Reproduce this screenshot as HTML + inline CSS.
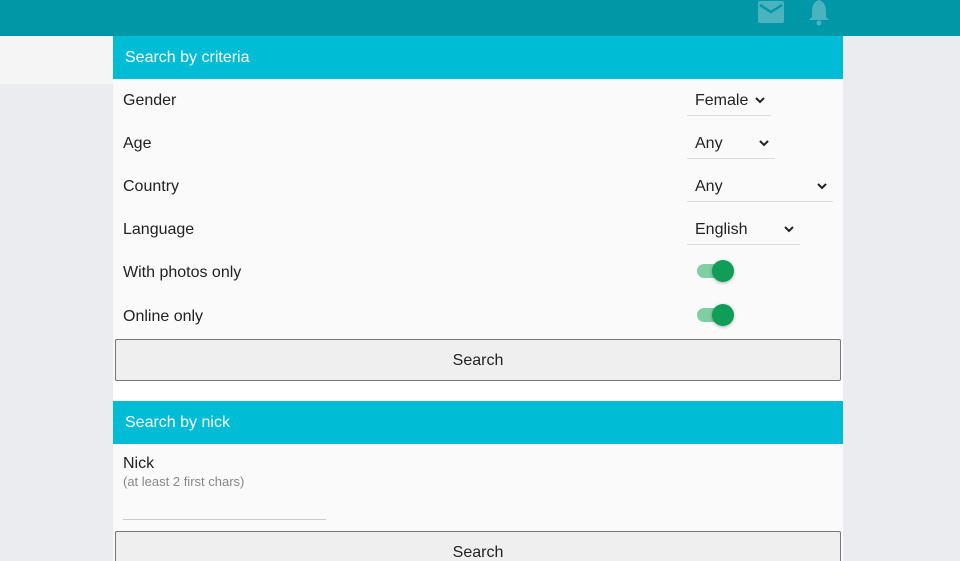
<!DOCTYPE html><html style="overflow:hidden;height:561px"><head><style>
body{margin:0;width:960px;height:561px;overflow:hidden;background:#ebecef;font-family:"Liberation Sans",Roboto,sans-serif;color:#222;position:relative}
.a{position:absolute}
.top{left:0;top:0;width:960px;height:36px;background:#0097a7}
.lb{left:0;top:36px;width:113px;height:48px;background:#f5f5f5}
.panel{left:113px;top:36px;width:730px;height:525px;background:#fafafa}
.hd{left:113px;width:730px;height:43px;background:#00bcd4;color:#fff;font-size:16px;line-height:44px;text-indent:12px}
.lbl{left:123px;font-size:16px}
.sel{font-size:16px;border-bottom:1px solid #ddd;height:30px;line-height:30px;padding-left:8px;box-sizing:border-box}
.sel svg{position:absolute;right:6px;top:11px}
.btn{left:115px;width:724px;height:40px;border:1px solid #777;border-radius:2px;background:#efefef;text-align:center;line-height:41px;font-size:16px}
.tr{left:697px;width:34px;height:14px;border-radius:7px;background:#7fcfa3}
.th{left:712px;width:22px;height:22px;border-radius:50%;background:#0f9d58;box-shadow:0 1px 3px rgba(0,0,0,.3)}
</style></head><body>
<div class="a top"></div>
<svg class="a" style="left:757px;top:1px" width="28" height="22" viewBox="0 0 28 22"><rect x="1" y="0" width="26" height="22" rx="2" fill="#4bb3bf"/><path d="M3 4 L14 11 L25 4" stroke="#0097a7" stroke-width="2.5" fill="none"/></svg>
<svg class="a" style="left:807px;top:0" width="24" height="26" viewBox="0 0 24 26"><path d="M12 0 C6 2 5 7 5 12 L5 17 L2 20 L22 20 L19 17 L19 12 C19 7 18 2 12 0Z" fill="#4bb3bf"/><circle cx="12" cy="23" r="2.5" fill="#4bb3bf"/></svg>
<div class="a lb"></div>
<div class="a panel"></div>
<div class="a hd" style="top:36px">Search by criteria</div>
<div class="a lbl" style="top:92px">Gender</div>
<div class="a lbl" style="top:135px">Age</div>
<div class="a lbl" style="top:178px">Country</div>
<div class="a lbl" style="top:221px">Language</div>
<div class="a lbl" style="top:264px">With photos only</div>
<div class="a lbl" style="top:308px">Online only</div>
<div class="a sel" style="left:687px;top:86px;width:84px">Female<svg width="10" height="7"><path d="M1 1L5 5L9 1" stroke="#222" stroke-width="2" fill="none"/></svg></div>
<div class="a sel" style="left:687px;top:129px;width:88px">Any<svg width="10" height="7"><path d="M1 1L5 5L9 1" stroke="#222" stroke-width="2" fill="none"/></svg></div>
<div class="a sel" style="left:687px;top:172px;width:146px">Any<svg width="10" height="7"><path d="M1 1L5 5L9 1" stroke="#222" stroke-width="2" fill="none"/></svg></div>
<div class="a sel" style="left:687px;top:215px;width:113px">English<svg width="10" height="7"><path d="M1 1L5 5L9 1" stroke="#222" stroke-width="2" fill="none"/></svg></div>
<div class="a tr" style="top:264px"></div><div class="a th" style="top:260px"></div>
<div class="a tr" style="top:308px"></div><div class="a th" style="top:304px"></div>
<div class="a btn" style="top:339px">Search</div>
<div class="a" style="left:113px;top:381px;width:730px;height:20px;background:#fff"></div>
<div class="a hd" style="top:401px">Search by nick</div>
<div class="a lbl" style="top:455px">Nick</div>
<div class="a" style="left:123px;top:474px;font-size:13px;color:#888">(at least 2 first chars)</div>
<div class="a" style="left:123px;top:519px;width:203px;border-bottom:1px solid #ccc"></div>
<div class="a btn" style="top:531px">Search</div>
</body></html>
